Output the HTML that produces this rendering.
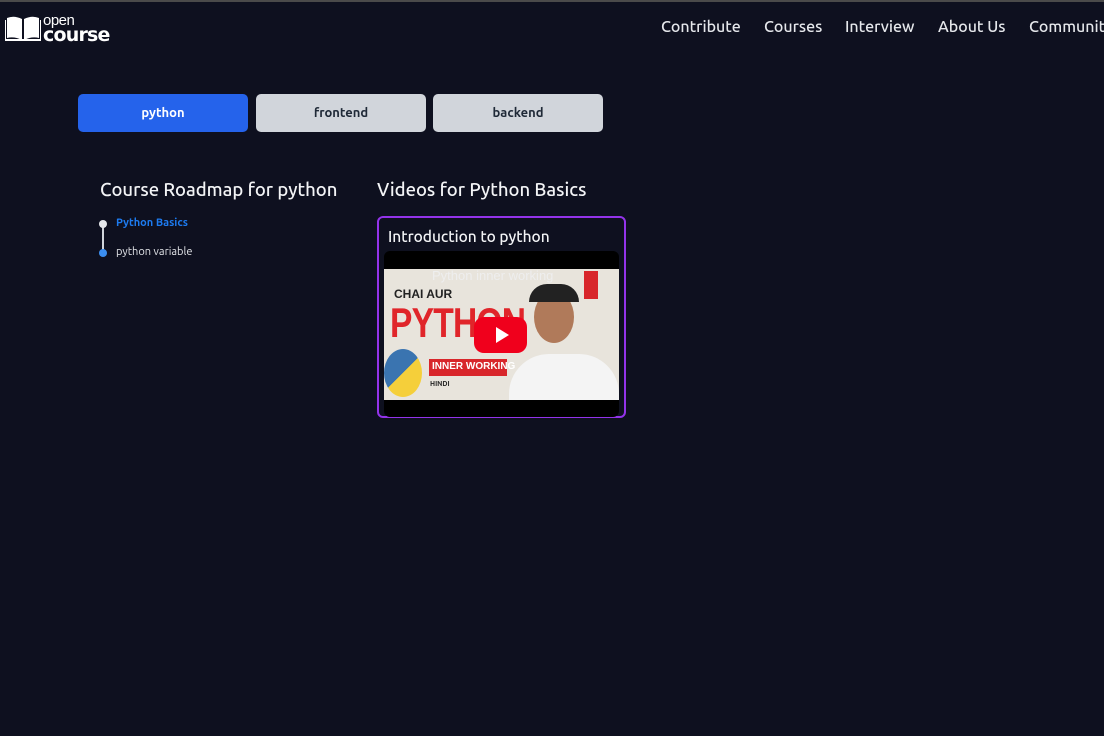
<!DOCTYPE html>
<html><head><meta charset="utf-8"><style>
*{margin:0;padding:0;box-sizing:border-box}
body{width:1104px;height:736px;background:#0e101f;font-family:"Ubuntu","DejaVu Sans","Liberation Sans",sans-serif;color:#e5e7eb;position:relative;overflow:hidden}
.topline{position:absolute;left:0;top:0;width:1104px;height:2px;background:#4a4a4a}
.logo{position:absolute;left:5px;top:15px}
.nav{position:absolute;top:18px;font-size:16px;color:#e5e7eb;font-weight:500}
.btn{position:absolute;top:94px;width:170px;height:38px;border-radius:5px;font-size:13px;font-weight:bold;display:flex;align-items:center;justify-content:center}
h2{position:absolute;font-size:18.5px;font-weight:500;color:#f3f4f6}
.card{position:absolute;left:377px;top:216px;width:249px;height:202px;border:2px solid #9333ea;border-radius:6px}
</style></head><body>
<div class="topline"></div>
<div class="logo">
<svg width="36" height="26" viewBox="0 0 36 26"><path d="M2 3 Q9 0 17 4 V25 Q9 21 2 23Z" fill="#fff"/><path d="M19 4 Q27 0 34 3 V23 Q27 21 19 25Z" fill="#fff"/><path d="M0 5 V25 H36 V5" stroke="#fff" stroke-width="2" fill="none"/></svg>
<div style="position:absolute;left:38px;top:-3px;font-size:15px;color:#fff;font-family:'Liberation Sans',sans-serif;letter-spacing:-0.5px">open</div>
<div style="position:absolute;left:38px;top:9px;font-size:19px;font-weight:bold;color:#fff;font-family:'DejaVu Sans',sans-serif;letter-spacing:-0.8px">course</div>
</div>
<div class="nav" style="left:661px">Contribute</div>
<div class="nav" style="left:764px">Courses</div>
<div class="nav" style="left:845px">Interview</div>
<div class="nav" style="left:938px">About Us</div>
<div class="nav" style="left:1029px">Community</div>
<div class="btn" style="left:78px;background:#2563eb;color:#fff">python</div>
<div class="btn" style="left:256px;background:#d1d5db;color:#1f2937">frontend</div>
<div class="btn" style="left:433px;background:#d1d5db;color:#1f2937">backend</div>
<h2 style="left:100px;top:180px">Course Roadmap for python</h2>
<h2 style="left:377px;top:180px">Videos for Python Basics</h2>
<div style="position:absolute;left:102px;top:226px;width:2px;height:29px;background:#d1d5db"></div>
<div style="position:absolute;left:99px;top:220px;width:8px;height:8px;border-radius:50%;background:#e5e7eb"></div>
<div style="position:absolute;left:99px;top:249px;width:8px;height:8px;border-radius:50%;background:#3b8ef0"></div>
<div style="position:absolute;left:116px;top:217px;font-size:11px;font-weight:bold;color:#1d7bf0">Python Basics</div>
<div style="position:absolute;left:116px;top:246px;font-size:11px;color:#e5e7eb">python variable</div>
<div class="card">
<div style="position:absolute;left:9px;top:10px;font-size:15.5px;font-weight:500;color:#f3f4f6">Introduction to python</div>
<div style="position:absolute;left:5px;top:33px;width:235px;height:166px;background:#000;border-radius:6px;overflow:hidden">
<div style="position:absolute;left:0;top:18px;width:235px;height:131px;background:#e8e4dc;overflow:hidden">
<div style="position:absolute;left:10px;top:18px;font-size:12px;font-weight:bold;color:#222;font-family:'Liberation Sans',sans-serif">CHAI AUR</div>
<div style="position:absolute;left:6px;top:30px;font-size:42px;font-weight:bold;color:#e0252a;font-family:'Liberation Sans',sans-serif;transform:scaleX(0.8);transform-origin:left;letter-spacing:-1px">PYTHON</div>
<div style="position:absolute;left:0;top:80px;width:38px;height:48px;border-radius:50%;background:linear-gradient(135deg,#3a74b0 50%,#f5cf3a 50%)"></div>
<div style="position:absolute;left:45px;top:90px;width:78px;height:17px;background:#d8262b;color:#fff;font-size:10px;font-weight:bold;padding:2px 0 0 3px;white-space:nowrap;font-family:'Liberation Sans',sans-serif">INNER WORKING</div>
<div style="position:absolute;left:46px;top:111px;font-size:7px;font-weight:bold;color:#222">HINDI</div>
<div style="position:absolute;left:125px;top:85px;width:110px;height:60px;border-radius:40px 40px 0 0;background:#f4f4f4"></div>
<div style="position:absolute;left:150px;top:22px;width:40px;height:52px;border-radius:50%;background:#b07a5a"></div>
<div style="position:absolute;left:145px;top:15px;width:50px;height:18px;border-radius:25px 25px 0 0;background:#222"></div>
<div style="position:absolute;left:200px;top:2px;width:14px;height:28px;background:#d8262b"></div>
<div style="position:absolute;left:90px;top:48px;width:53px;height:36px;border-radius:10px;background:#f0001c"></div>
<div style="position:absolute;left:112px;top:58px;width:0;height:0;border-left:13px solid #fff;border-top:8px solid transparent;border-bottom:8px solid transparent"></div>
</div>
<div style="position:absolute;left:48px;top:17px;font-size:13px;color:#eee;font-family:'Liberation Sans',sans-serif">Python inner working</div>
</div>
</div>
</body></html>
